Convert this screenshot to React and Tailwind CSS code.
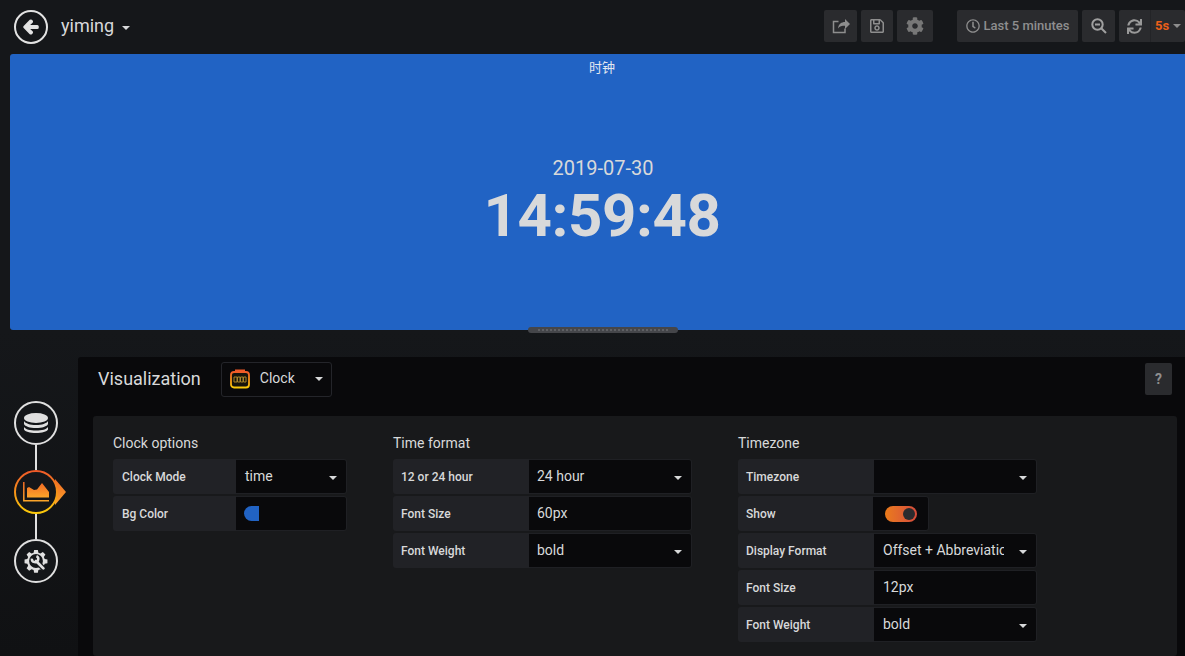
import React from "react";
import { FaArrowLeft, FaRegSave, FaCog, FaRegClock, FaSync } from "react-icons/fa";

const Caret = ({ className = "" }) => (
  <span className={`inline-block w-0 h-0 border-x-[4px] border-x-transparent border-t-[4px] border-t-[#d8d9da] ${className}`} />
);

const TopBtn = ({ className = "", children }) => (
  <div className={`h-[32px] flex items-center justify-center rounded-[2px] bg-[#2a2b2e] text-[#8e8e8e] ${className}`}>{children}</div>
);

const Row = ({ label, labelW, inputW, children, caret, pad = "pl-[8px]", valuePad }) => (
  <div className="flex h-[35px]">
    <div style={{ width: labelW }} className={`flex items-center ${pad} bg-[#212226] rounded-l-[3px] text-[12px] font-medium text-[#d8d9da] shrink-0`}>{label}</div>
    <div style={{ width: inputW }} className={`relative flex items-center ${valuePad || pad} bg-[#09090b] border border-[#1f2024] border-l-0 rounded-r-[3px] text-[14px] text-[#d8d9da] overflow-hidden`}>
      {children}
      {caret && <Caret className="absolute right-[9px] top-[16px]" />}
    </div>
  </div>
);

const Section = ({ title, className = "", children }) => (
  <div className={`flex flex-col ${className}`}>
    <div className="h-[24px] text-[14px] leading-[17px] text-[#d8d9da]">{title}</div>
    <div className="flex flex-col gap-[2px]">{children}</div>
  </div>
);

const Circle = ({ children }) => (
  <div className="w-[44px] h-[44px] rounded-full border-[2px] border-[#e0e0e0] flex items-center justify-center bg-[#141619] shrink-0">{children}</div>
);

const Line = () => <div className="w-[2px] h-[25px] bg-[#e0e0e0]" />;

export default function App() {
  return (
    <div className="w-[1185px] h-[656px] overflow-hidden bg-[#15171a] text-[#d8d9da]" style={{ fontFamily: "Roboto, 'Noto Sans CJK SC', sans-serif" }}>
      <header className="h-[54px] flex items-start">
        <div className="mt-[10px] ml-[14px] w-[34px] h-[34px] rounded-full border-[2px] border-[#e3e3e3] flex items-center justify-center text-[#e3e3e3] shrink-0">
          <FaArrowLeft size={16} stroke="#e3e3e3" strokeWidth={50} />
        </div>
        <div className="ml-[13px] mt-[13px] text-[18px] leading-[26px] text-[#d8d9da]">yiming</div>
        <Caret className="ml-[8px] mt-[26px]" />
        <div className="ml-auto flex mt-[10px] w-[361px] shrink-0">
          <TopBtn className="w-[33px]">
            <svg width="18" height="16" viewBox="0 0 18 16">
              <path d="M13 10.500V14.500H1.500V3.500H6.500" fill="none" stroke="#8e8e8e" strokeWidth="1.500" />
              <path d="M6 10.500C6.500 6 9.500 4 13 4V1l5 5-5 5V7.800C10 7.800 7.500 8.300 6 10.500z" fill="#8e8e8e" />
            </svg>
          </TopBtn>
          <TopBtn className="w-[32px] ml-[4px]"><FaRegSave size={16} /></TopBtn>
          <TopBtn className="w-[36px] ml-[4px]"><FaCog size={18} className="text-[#777]" /></TopBtn>
          <TopBtn className="w-[121px] ml-[24px] gap-[4px] text-[13px] font-medium"><FaRegClock size={14} /><span>Last 5 minutes</span></TopBtn>
          <TopBtn className="w-[33px] ml-[4px]">
            <svg width="16" height="16" viewBox="0 0 16 16" fill="none" stroke="#a0a0a0" strokeWidth="2"><circle cx="6.500" cy="6.500" r="5.200" /><path d="M4 6.500h5M10.500 10.500l4.500 4.500" /></svg>
          </TopBtn>
          <TopBtn className="w-[66px] ml-[4px] justify-start">
            <div className="w-[31px] h-[32px] flex items-center justify-center"><FaSync size={15} className="text-[#999]" /></div>
            <div className="h-[32px] flex-1 flex items-center pl-[4px] border-l border-[#232427]">
              <span className="text-[13px] font-bold text-[#eb5f18] leading-[32px]">5s</span>
              <Caret className="ml-[4px] !border-t-[#8e8e8e]" />
            </div>
          </TopBtn>
        </div>
      </header>

      <section className="ml-[10px] w-[1186px] h-[276px] bg-[#2163c4] rounded-[3px] flex flex-col items-center relative">
        <div className="mt-[5px] mr-[2px] text-[13px] leading-[18px] text-[#e3e8f0]">时钟</div>
        <div className="mt-[79px] text-[20px] leading-[24px] text-[#d8d9da]">2019-07-30</div>
        <div className="mt-[1px] mr-[2px] text-[60px] leading-[70px] font-bold tracking-[-0.4px] text-[#d8d9da]">14:59:48</div>
        <div className="absolute left-[518px] -bottom-[3px] w-[150px] h-[6px] rounded-[3px] bg-[#45464a] flex items-center justify-center gap-[2px] overflow-hidden">
          {Array.from({ length: 33 }).map((_, i) => <span key={i} className="w-[2px] h-[2px] bg-[#5f6064] shrink-0" />)}
        </div>
      </section>

      <div className="flex h-[326px] bg-gradient-to-b from-[#15171a] to-[#101113]">
        <aside className="w-[78px] shrink-0 flex flex-col items-center pt-[71px] pr-[6px]">
          <Circle>
            <svg width="24" height="20" viewBox="0 0 24 20" fill="#e0e0e0">
              <ellipse cx="12" cy="5" rx="12" ry="5" />
              <path d="M0 8c1.500 2.500 6 4 12 4s10.500-1.500 12-4v3c-1 2.500-6 4-12 4S1 13.500 0 11z" />
              <path d="M0 14c1.500 2.500 6 3.500 12 3.500S22.500 16.500 24 14v2.500c-1 2-6 3.500-12 3.500S1 18.500 0 16.500z" />
            </svg>
          </Circle>
          <Line />
          <svg width="56" height="44" viewBox="0 0 56 44" className="block" style={{ marginLeft: 12 }}>
            <defs>
              <linearGradient id="g" x1="0" y1="0" x2="0" y2="1"><stop offset="0" stopColor="#f05a28" /><stop offset="1" stopColor="#fbca0a" /></linearGradient>
              <linearGradient id="g2" x1="0" y1="0" x2="0" y2="1"><stop offset="0" stopColor="#f26a24" /><stop offset="1" stopColor="#fba52a" /></linearGradient>
            </defs>
            <path d="M52 22L41 9v26z" fill="url(#g2)" />
            <circle cx="22" cy="22" r="21" fill="#141619" stroke="url(#g)" strokeWidth="2" />
            <path d="M9.800 12v18.800H35" fill="none" stroke="url(#g2)" strokeWidth="1.500" />
            <path d="M13 27.500V18l2-1 5 3 3-.5 5-6.500 7 9v5.500z" fill="url(#g2)" />
          </svg>
          <Line />
          <Circle>
            <svg width="24" height="24" viewBox="0 0 26 26">
              <path fill="#e0e0e0" fillRule="evenodd" d="M11 1h4l.6 3 2.200.9 2.600-1.700 2.800 2.800-1.700 2.600.9 2.200 3 .6v4l-3 .6-.9 2.200 1.700 2.600-2.800 2.800-2.600-1.700-2.200.9-.6 3h-4l-.6-3-2.200-.9-2.600 1.700-2.800-2.800 1.700-2.600-.9-2.200-3-.6v-4l3-.6.9-2.200-1.700-2.600 2.800-2.800 2.600 1.700 2.200-.9zM13 5.500a7.500 7.500 0 100 15 7.500 7.500 0 000-15z" />
              <path d="M14 14l7.500 7.500" stroke="#141619" strokeWidth="5.500" strokeLinecap="round" />
              <path d="M13 13l8 8" stroke="#e0e0e0" strokeWidth="3" strokeLinecap="round" />
              <path d="M8.500 10.500a3.500 3.500 0 105-2.800" fill="none" stroke="#e0e0e0" strokeWidth="2.600" />
            </svg>
          </Circle>
        </aside>
        <main className="flex-1 mt-[27px] bg-[#09090b] rounded-tl-[3px] min-w-0">
          <div className="h-[59px] flex items-start pl-[20px] pr-[13px]">
            <div className="mt-[11px] text-[18px] leading-[22px] text-[#d8d9da]">Visualization</div>
            <div className="ml-[20px] mt-[5px] w-[111px] h-[35px] rounded-[3px] border border-[#24252a] flex items-center pl-[8px] pb-[2px] text-[14px] relative">
              <svg width="20" height="20" viewBox="0 0 20 20" fill="none">
                <rect x="1" y="3" width="18" height="15.500" rx="3" fill="#17140c" stroke="url(#g)" strokeWidth="1.800" />
                <rect x="5" y="0.500" width="10" height="2.500" fill="#f05a28" />
                <path d="M4 8h3v5H4zM7.500 8h2.500v5H7.500zM10.500 8h2.500v5h-2.500zM13.500 8h2.500v5h-2.500z" fill="none" stroke="#a8842a" strokeWidth="1" />
              </svg>
              <span className="ml-[10px]">Clock</span>
              <Caret className="absolute right-[8px] top-[14px]" />
            </div>
            <div className="ml-auto mt-[6px] w-[27px] h-[32px] rounded-[2px] bg-[#2a2b2e] flex items-center justify-center text-[14px] font-bold text-[#8e8e8e]">?</div>
          </div>
          <div className="ml-[15px] w-[1084px] h-[240px] bg-[#18191b] rounded-[3px] pl-[20px] pt-[19px] flex">
            <Section title="Clock options" className="w-[280px]">
              <Row label="Clock Mode" labelW={123} inputW={111} caret pad="pl-[9px]">time</Row>
              <Row label="Bg Color" labelW={123} inputW={111} pad="pl-[9px]">
                <span className="-ml-[1px] w-[15px] h-[15px] bg-[#2163c4] rounded-l-[7.500px]" />
              </Row>
            </Section>
            <Section title="Time format" className="w-[345px]">
              <Row label="12 or 24 hour" labelW={136} inputW={163} caret>24 hour</Row>
              <Row label="Font Size" labelW={136} inputW={163}>60px</Row>
              <Row label="Font Weight" labelW={136} inputW={163} caret>bold</Row>
            </Section>
            <Section title="Timezone" className="w-[299px]">
              <Row label="Timezone" labelW={136} inputW={163} caret />
              <Row label="Show" labelW={135} inputW={56}>
                <span className="ml-[4px] w-[32px] h-[16px] rounded-full bg-gradient-to-r from-[#eb7b18] to-[#d44a3a] relative block">
                  <span className="absolute right-[2px] top-[2px] w-[12px] h-[12px] rounded-full bg-[#2b2b2e]" />
                </span>
              </Row>
              <Row label="Display Format" labelW={136} inputW={163} caret valuePad="pl-[9px]">
                <span className="w-[121px] overflow-hidden whitespace-nowrap">Offset + Abbreviation</span>
              </Row>
              <Row label="Font Size" labelW={136} inputW={163} valuePad="pl-[9px]">12px</Row>
              <Row label="Font Weight" labelW={136} inputW={163} caret valuePad="pl-[9px]">bold</Row>
            </Section>
          </div>
        </main>
      </div>
    </div>
  );
}
